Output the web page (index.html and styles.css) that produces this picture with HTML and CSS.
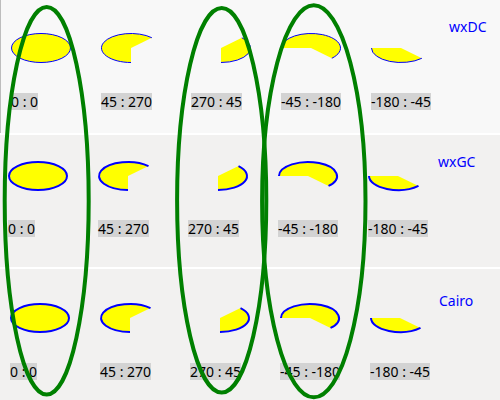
FILE: index.html
```html
<!DOCTYPE html>
<html>
<head>
<meta charset="utf-8">
<link rel="stylesheet" href="styles.css">
</head>
<body>
<div class="page">
  <section class="row row-dc">
    <div class="cells">
      <div class="cell">
        <svg class="pie" viewBox="0 0 60 30" width="60" height="30"><ellipse class="fill" cx="30" cy="15" rx="29.5" ry="14.5"/><ellipse class="arc" cx="30" cy="15" rx="29.5" ry="14.5"/></svg>
        <span class="lbl">0 : 0</span>
      </div>
      <div class="cell">
        <svg class="pie" viewBox="0 0 60 30" width="60" height="30"><path class="fill" d="M30 15 L50.86 4.75 A29.5 14.5 0 1 0 30 29.5 Z"/><path class="arc" d="M50.86 4.75 A29.5 14.5 0 1 0 30 29.5"/></svg>
        <span class="lbl">45 : 270</span>
      </div>
      <div class="cell">
        <svg class="pie" viewBox="0 0 60 30" width="60" height="30"><path class="fill" d="M30 15 L30 29.5 A29.5 14.5 0 0 0 50.86 4.75 Z"/><path class="arc" d="M30 29.5 A29.5 14.5 0 0 0 50.86 4.75"/></svg>
        <span class="lbl">270 : 45</span>
      </div>
      <div class="cell">
        <svg class="pie" viewBox="0 0 60 30" width="60" height="30"><path class="fill" d="M30 15 L50.86 25.25 A29.5 14.5 0 1 0 0.5 15 Z"/><path class="arc" d="M50.86 25.25 A29.5 14.5 0 1 0 0.5 15"/></svg>
        <span class="lbl">-45 : -180</span>
      </div>
      <div class="cell">
        <svg class="pie" viewBox="0 0 60 30" width="60" height="30"><path class="fill" d="M30 15 L0.5 15 A29.5 14.5 0 0 0 50.86 25.25 Z"/><path class="arc" d="M0.5 15 A29.5 14.5 0 0 0 50.86 25.25"/></svg>
        <span class="lbl">-180 : -45</span>
      </div>
    </div>
    <div class="title">wxDC</div>
  </section>

  <section class="row row-gc">
    <div class="cells">
      <div class="cell">
        <svg class="pie" viewBox="0 0 60 30" width="60" height="30"><ellipse class="fill" cx="30" cy="15" rx="29" ry="14"/><ellipse class="arc" cx="30" cy="15" rx="29" ry="14"/></svg>
        <span class="lbl">0 : 0</span>
      </div>
      <div class="cell">
        <svg class="pie" viewBox="0 0 60 30" width="60" height="30"><path class="fill" d="M30 15 L50.51 5.1 A29 14 0 1 0 30 29 Z"/><path class="arc" d="M50.51 5.1 A29 14 0 1 0 30 29"/></svg>
        <span class="lbl">45 : 270</span>
      </div>
      <div class="cell">
        <svg class="pie" viewBox="0 0 60 30" width="60" height="30"><path class="fill" d="M30 15 L30 29 A29 14 0 0 0 50.51 5.1 Z"/><path class="arc" d="M30 29 A29 14 0 0 0 50.51 5.1"/></svg>
        <span class="lbl">270 : 45</span>
      </div>
      <div class="cell">
        <svg class="pie" viewBox="0 0 60 30" width="60" height="30"><path class="fill" d="M30 15 L50.51 24.9 A29 14 0 1 0 1 15 Z"/><path class="arc" d="M50.51 24.9 A29 14 0 1 0 1 15"/></svg>
        <span class="lbl">-45 : -180</span>
      </div>
      <div class="cell">
        <svg class="pie" viewBox="0 0 60 30" width="60" height="30"><path class="fill" d="M30 15 L1 15 A29 14 0 0 0 50.51 24.9 Z"/><path class="arc" d="M1 15 A29 14 0 0 0 50.51 24.9"/></svg>
        <span class="lbl">-180 : -45</span>
      </div>
    </div>
    <div class="title">wxGC</div>
  </section>

  <section class="row row-cairo">
    <div class="cells">
      <div class="cell">
        <svg class="pie" viewBox="0 0 60 30" width="60" height="30"><ellipse class="fill" cx="30" cy="15" rx="29" ry="14"/><ellipse class="arc" cx="30" cy="15" rx="29" ry="14"/></svg>
        <span class="lbl">0 : 0</span>
      </div>
      <div class="cell">
        <svg class="pie" viewBox="0 0 60 30" width="60" height="30"><path class="fill" d="M30 15 L50.51 5.1 A29 14 0 1 0 30 29 Z"/><path class="arc" d="M50.51 5.1 A29 14 0 1 0 30 29"/></svg>
        <span class="lbl">45 : 270</span>
      </div>
      <div class="cell">
        <svg class="pie" viewBox="0 0 60 30" width="60" height="30"><path class="fill" d="M30 15 L30 29 A29 14 0 0 0 50.51 5.1 Z"/><path class="arc" d="M30 29 A29 14 0 0 0 50.51 5.1"/></svg>
        <span class="lbl">270 : 45</span>
      </div>
      <div class="cell">
        <svg class="pie" viewBox="0 0 60 30" width="60" height="30"><path class="fill" d="M30 15 L50.51 24.9 A29 14 0 1 0 1 15 Z"/><path class="arc" d="M50.51 24.9 A29 14 0 1 0 1 15"/></svg>
        <span class="lbl">-45 : -180</span>
      </div>
      <div class="cell">
        <svg class="pie" viewBox="0 0 60 30" width="60" height="30"><path class="fill" d="M30 15 L1 15 A29 14 0 0 0 50.51 24.9 Z"/><path class="arc" d="M1 15 A29 14 0 0 0 50.51 24.9"/></svg>
        <span class="lbl">-180 : -45</span>
      </div>
    </div>
    <div class="title">Cairo</div>
  </section>

  <svg class="marks" viewBox="0 0 500 400" width="500" height="400">
    <ellipse cx="46.7" cy="200.8" rx="42" ry="193.8"/>
    <ellipse cx="221.7" cy="200.3" rx="44.6" ry="192.3"/>
    <ellipse cx="313.8" cy="201.3" rx="51.7" ry="196"/>
  </svg>
</div>
</body>
</html>
```

FILE: styles.css
```css
html, body {
  margin: 0;
  padding: 0;
}

body {
  width: 500px;
  height: 400px;
  overflow: hidden;
  background: #ffffff;
  font-family: "Noto Sans", "DejaVu Sans", sans-serif;
  font-size: 14px;
  color: #000000;
}

.page {
  position: relative;
  display: flex;
  flex-direction: column;
  gap: 2px;
  width: 500px;
  height: 400px;
  background: #ffffff;
}

.row {
  display: flex;
  align-items: flex-start;
  box-sizing: border-box;
}

.row-dc {
  height: 133px;
  padding-left: 10px;
  background: #f8f8f8;
  border-left: 1px solid #bdbdbd;
}

.row-gc {
  height: 132px;
  padding-left: 8px;
  background: #f2f1f0;
}

.row-cairo {
  height: 131px;
  padding-left: 10px;
  background: #f2f1f0;
}

.cells {
  display: flex;
  gap: 30px;
}

.row-dc .cells { margin-top: 33px; }
.row-gc .cells { margin-top: 26px; }
.row-cairo .cells { margin-top: 34px; }

.cell {
  width: 60px;
  display: flex;
  flex-direction: column;
  align-items: flex-start;
}

.pie {
  display: block;
  overflow: visible;
}

.row-dc .lbl { margin-top: 30px; }
.row-gc .lbl { margin-top: 29px; }
.row-cairo .lbl { margin-top: 30px; }

.lbl {
  display: block;
  white-space: nowrap;
  line-height: 17px;
  background: #d3d3d3;
  color: #000000;
}

.fill {
  fill: #ffff00;
  stroke: none;
}

.arc {
  fill: none;
  stroke: #0000ff;
  stroke-width: 2;
}

.row-dc .arc {
  stroke-width: 1;
}

.title {
  line-height: 17px;
  color: #0000ff;
  white-space: nowrap;
}

.row-dc .title { margin-top: 18px; margin-left: 18px; }
.row-gc .title { margin-top: 18px; margin-left: 10px; }
.row-cairo .title { margin-top: 23px; margin-left: 9px; }

.marks {
  position: absolute;
  left: 0;
  top: 0;
  pointer-events: none;
}

.marks ellipse {
  fill: none;
  stroke: #008000;
  stroke-width: 4;
}
```
